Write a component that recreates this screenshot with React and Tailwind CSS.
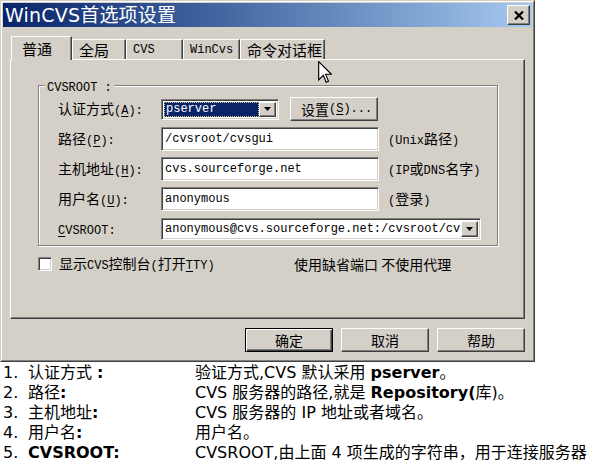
const M = ({ children }) => (
  <span className="font-['Liberation_Mono',monospace] text-[12px]">{children}</span>
);

const U = ({ children }) => <span className="underline underline-offset-2">{children}</span>;

const raised =
  "border border-t-white border-l-white border-r-[#404040] border-b-[#404040] shadow-[inset_-1px_-1px_0_#808080]";
const sunken =
  "border border-t-[#808080] border-l-[#808080] border-r-white border-b-white shadow-[inset_1px_1px_0_#404040,inset_-1px_-1px_0_#d4d0c8]";

function Arrow() {
  return (
    <svg width="7" height="4" viewBox="0 0 7 4">
      <path d="M0 0H7L3.5 4Z" fill="black" />
    </svg>
  );
}

function Field({ value, w = "w-[218px]" }) {
  return (
    <div className={`${w} h-[24px] bg-white ${sunken} flex items-center pl-[3px] overflow-hidden whitespace-nowrap`}>
      <M>{value}</M>
    </div>
  );
}

function Tab({ label, w, active }) {
  return (
    <div
      className={
        active
          ? `${w} h-[24px] -mb-px relative z-10 ml-px bg-[#d4d0c8] border-t border-l border-r border-t-white border-l-white border-r-[#404040] shadow-[inset_-1px_0_0_#808080] pl-[10px] flex items-center text-[15px]`
          : `${w} h-[20px] bg-[#d4d0c8] border-t border-l border-r border-t-white border-l-white border-r-[#404040] shadow-[inset_-1px_0_0_#808080] pl-[6px] flex items-center text-[15px]`
      }
    >
      {label}
    </div>
  );
}

function Btn({ children, def }) {
  return (
    <div
      className={
        def
          ? "w-[88px] h-[24px] flex items-center justify-center border border-black shadow-[inset_1px_1px_0_#fff,inset_-1px_-1px_0_#404040,inset_-2px_-2px_0_#808080]"
          : `w-[88px] h-[24px] flex items-center justify-center ${raised}`
      }
    >
      {children}
    </div>
  );
}

const rows = [
  { n: "1.", label: <>认证方式 <b>:</b></>, desc: <>验证方式,CVS 默认采用 <b>pserver</b>。</> },
  { n: "2.", label: <>路径<b>:</b></>, desc: <>CVS 服务器的路径,就是 <b>Repository(</b>库)。</> },
  { n: "3.", label: <>主机地址<b>:</b></>, desc: <>CVS 服务器的 IP 地址或者域名。</> },
  { n: "4.", label: <>用户名<b>:</b></>, desc: <>用户名。</> },
  { n: "5.", label: <b>CVSROOT:</b>, desc: <>CVSROOT,由上面 4 项生成的字符串，用于连接服务器</> },
];

export default function App() {
  return (
    <div className="w-[603px] h-[470px] bg-white overflow-hidden relative">
      {/* dialog */}
      <div className="w-[535px] h-[362px] bg-[#d4d0c8] border border-t-[#d4d0c8] border-l-[#d4d0c8] border-r-[#404040] border-b-[#404040] font-['Noto_Sans_CJK_SC',sans-serif] text-[14px] leading-none text-black">
        <div className="h-full border border-t-white border-l-white border-r-[#808080] border-b-[#808080] p-px">
          <div className="h-[24px] bg-gradient-to-r from-[#0a246a] to-[#a6caf0] flex items-center justify-between pl-[2px] pr-[2px]">
            <span className="text-white text-[19px] font-['DejaVu_Sans','Noto_Sans_CJK_SC',sans-serif] tracking-[0.2px]">
              WinCVS首选项设置
            </span>
            <div className={`w-[23px] h-[20px] bg-[#d4d0c8] ${raised} flex items-center justify-center`}>
              <svg width="10" height="9" viewBox="0 0 10 9">
                <path d="M1 0.5L9 8.5M9 0.5L1 8.5" stroke="black" strokeWidth="2.2" />
              </svg>
            </div>
          </div>

          <div className="px-[7px] pt-[9px]">
            <div className="flex items-end h-[23px]">
              <Tab label="普通" w="w-[61px]" active />
              <Tab label="全局" w="w-[54px]" />
              <Tab label={<M>CVS</M>} w="w-[57px]" />
              <Tab label={<M>WinCvs</M>} w="w-[57px]" />
              <Tab label="命令对话框" w="w-[85px]" />
            </div>

            <div className="w-[515px] h-[260px] border border-t-white border-l-white border-r-[#404040] border-b-[#404040] shadow-[inset_-1px_-1px_0_#808080] pl-[27px] pt-[25px]">
              <div className="relative w-[460px] h-[161px] border border-[#808080] shadow-[inset_1px_1px_0_#fff,1px_1px_0_#fff] pl-[19px] pt-[11px] flex flex-col gap-[6px]">
                <span className="absolute left-[6px] -top-[8px] bg-[#d4d0c8] px-[2px]">
                  <M>CVSROOT :</M>
                </span>

                <div className="flex items-center h-[24px]">
                  <div className="w-[103px]">认证方式<M>(<U>A</U>):</M></div>
                  <div className={`w-[118px] h-[21px] bg-white ${sunken} flex p-[2px]`}>
                    <div className="flex-1 bg-[#0a246a] text-white border border-dotted border-[#d8c878] flex items-center pl-px">
                      <M>pserver</M>
                    </div>
                    <div className={`w-[17px] bg-[#d4d0c8] ${raised} flex items-center justify-center`}>
                      <Arrow />
                    </div>
                  </div>
                  <div className={`ml-[11px] w-[88px] h-[24px] ${raised} flex items-center pl-[10px]`}>
                    设置<M>(<U>S</U>)...</M>
                  </div>
                </div>

                <div className="flex items-center h-[24px]">
                  <div className="w-[103px]">路径<M>(<U>P</U>):</M></div>
                  <Field value="/cvsroot/cvsgui" />
                  <div className="ml-[9px]"><M>(Unix</M>路径<M>)</M></div>
                </div>

                <div className="flex items-center h-[24px]">
                  <div className="w-[103px]">主机地址<M>(<U>H</U>):</M></div>
                  <Field value="cvs.sourceforge.net" />
                  <div className="ml-[9px]"><M>(IP</M>或<M>DNS</M>名字<M>)</M></div>
                </div>

                <div className="flex items-center h-[24px]">
                  <div className="w-[103px]">用户名<M>(<U>U</U>):</M></div>
                  <Field value="anonymous" />
                  <div className="ml-[9px]"><M>(</M>登录<M>)</M></div>
                </div>

                <div className="flex items-center h-[24px]">
                  <div className="w-[103px]"><M><U>C</U>VSROOT:</M></div>
                  <div className={`w-[320px] h-[22px] bg-white ${sunken} flex p-[2px]`}>
                    <div className="flex-1 flex items-center pl-px overflow-hidden whitespace-nowrap">
                      <M>anonymous@cvs.sourceforge.net:/cvsroot/cv</M>
                    </div>
                    <div className={`w-[17px] bg-[#d4d0c8] ${raised} flex items-center justify-center`}>
                      <Arrow />
                    </div>
                  </div>
                </div>
              </div>

              <div className="flex items-center mt-[10px] h-[15px]">
                <div className="w-[256px] flex items-center gap-[7px]">
                  <div className={`w-[14px] h-[14px] bg-white ${sunken}`} />
                  <span>显示<M>CVS</M>控制台<M>(</M>打开<M><U>T</U>TY)</M></span>
                </div>
                <span>使用缺省端口 不使用代理</span>
              </div>
            </div>

            <div className="w-[515px] flex justify-end gap-[8px] mt-[9px]">
              <Btn def>确定</Btn>
              <Btn>取消</Btn>
              <Btn>帮助</Btn>
            </div>
          </div>
        </div>
      </div>

      {/* notes below */}
      <div className="pt-px font-['DejaVu_Sans','Noto_Sans_CJK_SC',sans-serif] text-[16px] text-black">
        {rows.map((r, i) => (
          <div key={i} className="flex h-[20px] items-center whitespace-nowrap">
            <span className="w-[28px] pl-[3px]">{r.n}</span>
            <span className="w-[167px]">{r.label}</span>
            <span>{r.desc}</span>
          </div>
        ))}
      </div>

      {/* mouse pointer */}
      <svg className="absolute left-[318px] top-[61px]" width="14" height="23" viewBox="0 0 12 20">
        <path
          d="M0.5 0.5V16.5L4.5 12.5L7 18.5L9 17.5L6.5 11.5H11.5Z"
          fill="white"
          stroke="black"
          strokeWidth="1"
          strokeLinejoin="miter"
        />
      </svg>
    </div>
  );
}
